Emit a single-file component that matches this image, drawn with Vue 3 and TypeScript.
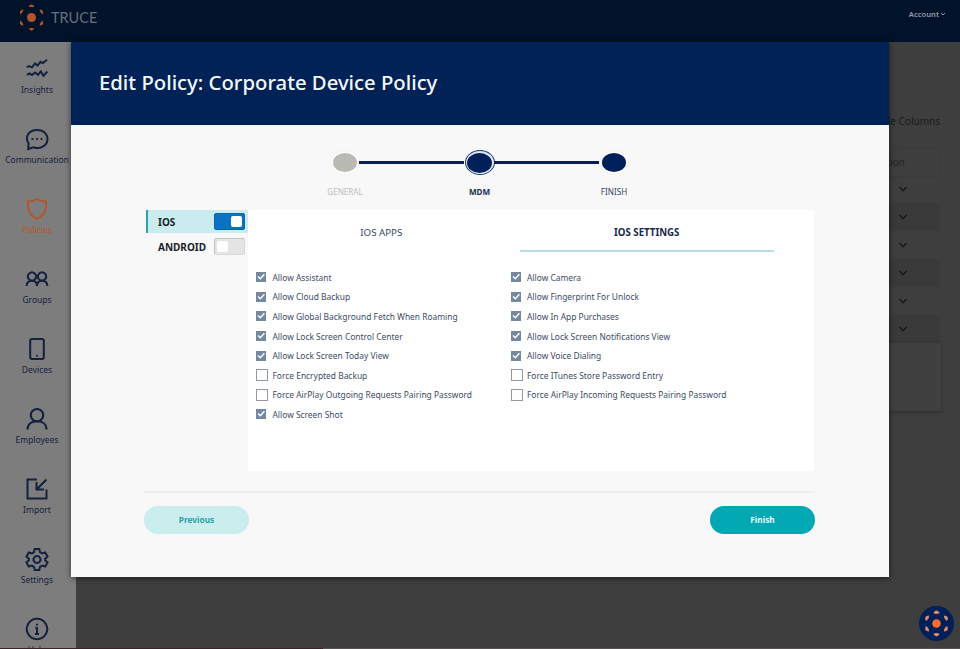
<template>
  <div class="app">
    <header class="topbar">
      <div class="brand">
        <svg class="logo" viewBox="0 0 26 26">
          <circle cx="13" cy="13" r="4.3" />
          <path v-for="a in angles" :key="a" d="M10.1 2.4Q13 -1.6 15.9 2.4Q13 3.6 10.1 2.4Z" :transform="`rotate(${a} 13 13)`" />
        </svg>
        <span class="brand-name">TRUCE</span>
      </div>
      <div class="account">
        Account
        <svg viewBox="0 0 6 4"><path d="M1 1L3 3L5 1" /></svg>
      </div>
    </header>

    <div class="body">
      <nav class="sidebar">
        <a v-for="item in menu" :key="item.label" :class="['nav-item', { active: item.label === 'Policies' }]">
          <svg viewBox="0 0 24 24"><path v-for="(d, i) in item.paths" :key="i" :d="d" /></svg>
          <span>{{ item.label }}</span>
        </a>
      </nav>

      <main class="page">
        <div class="columns-toggle">Hide Columns</div>
        <div class="table-head">Action</div>
        <div v-for="n in 6" :key="n" class="table-row">
          <svg viewBox="0 0 10 6"><path d="M1.2 1L5 4.6L8.8 1" /></svg>
        </div>
        <div class="table-foot"></div>
      </main>
    </div>

    <section class="modal">
      <div class="modal-header"><h1>Edit Policy: Corporate Device Policy</h1></div>
      <div class="modal-body">
        <div class="steps">
          <div v-for="step in steps" :key="step.label" :class="['step', step.state]">
            <div class="dot-ring"><div class="dot"></div></div>
            <span>{{ step.label }}</span>
          </div>
        </div>

        <div class="policy">
          <div class="platforms">
            <div v-for="p in platforms" :key="p.name" :class="['platform', { on: p.on }]" @click="p.on = !p.on">
              <span>{{ p.name }}</span>
              <div class="switch"><div class="knob"></div></div>
            </div>
          </div>
          <div class="panel">
            <div class="tabs">
              <div v-for="t in tabs" :key="t" :class="['tab', { selected: tab === t }]" @click="tab = t">
                <span>{{ t }}</span>
              </div>
            </div>
            <div class="settings">
              <div v-for="(column, c) in settings" :key="c" class="settings-col">
                <div v-for="s in column" :key="s.label" class="setting" @click="s.checked = !s.checked">
                  <div :class="['box', { checked: s.checked }]">
                    <svg v-if="s.checked" viewBox="0 0 10 10"><path d="M2 4.6L4.3 6.8L8.4 2.3" /></svg>
                  </div>
                  <span>{{ s.label }}</span>
                </div>
              </div>
            </div>
          </div>
        </div>

        <footer class="actions">
          <button class="btn previous">Previous</button>
          <button class="btn finish">Finish</button>
        </footer>
      </div>
    </section>

    <div class="help-bubble">
      <svg class="logo" viewBox="0 0 26 26">
        <circle cx="13" cy="13" r="4.1" />
        <path v-for="a in angles" :key="a" class="petal" d="M9.9 3Q13 -1.8 16.1 3Q13 4.8 9.9 3Z" :transform="`rotate(${a} 13 13)`" />
      </svg>
    </div>
    <div class="bottom-edge"></div>
  </div>
</template>

<script setup lang="ts">
import { ref } from 'vue';

interface Setting {
  label: string;
  checked: boolean;
}

const angles = [0, 60, 120, 180, 240, 300];

const menu = [
  { label: 'Insights', paths: ['M1.8 10.3L4 9L7 10.3L10 6.5L12.5 8.5L15.5 4.8L18 6L22 2.8', 'M1.8 17.8L4.5 16.5L7 18L10 15.5L13 17.8L15.8 14.5L18.5 18.8L22.2 14.5'] },
  { label: 'Communication', paths: ['M3.2 22L3.6 16.5C-.5 10 3.5 3 12 3C18.5 3 22.5 7 22.5 12C22.5 19 14.5 22.5 8.5 20.2Z', 'M6.6 12h1.8M11.1 12h1.8M15.6 12h1.8'] },
  { label: 'Policies', paths: ['M12 2Q16.5 4.8 21 4.6V10Q20.5 18 12 22Q3.5 18 3 10V4.6Q7.5 4.8 12 2Z'] },
  { label: 'Groups', paths: ['M7 5.3a4.2 4.2 0 1 0 .01 0zM17 5.3a4.2 4.2 0 1 0 .01 0z', 'M1.6 19C1.8 15.3 4 13.7 7 13.7S12 15.5 12 19C12 15.5 14 13.7 17 13.7S22.2 15.3 22.4 19'] },
  { label: 'Devices', paths: ['M7 2H17Q18.8 2 18.8 4V20Q18.8 22 17 22H7Q5.2 22 5.2 20V4Q5.2 2 7 2Z', 'M11.2 18.8h1.6'] },
  { label: 'Employees', paths: ['M12 2a6.2 6.2 0 1 0 .01 0z', 'M2.5 22.5C2.5 17 6.5 14.2 12 14.2S21.5 17 21.5 22.5'] },
  { label: 'Import', paths: ['M12 2.5H2.5V21.5H21.5V12.5', 'M21.5 2.5L12 12M11.5 5V12.5H19'] },
  { label: 'Settings', paths: ['M9.7 2H14.3L15 5.1L17.2 6.4L20.2 5.5L22.5 9.5L20.2 11.7V13.3L22.5 15.5L20.2 19.5L17.2 18.6L15 19.9L14.3 23H9.7L9 19.9L6.8 18.6L3.8 19.5L1.5 15.5L3.8 13.3V11.7L1.5 9.5L3.8 5.5L6.8 6.4L9 5.1Z', 'M12 9a3.5 3.5 0 1 0 .01 0z'] },
  { label: 'Help', paths: ['M12 1.8a10.2 10.2 0 1 0 .01 0z', 'M12 10.3V17.2M12 6.8v1.8M10.3 10.8H12M10 17H14'] },
];

const steps = [
  { label: 'GENERAL', state: 'done' },
  { label: 'MDM', state: 'current' },
  { label: 'FINISH', state: 'next' },
];

const platforms = ref([
  { name: 'IOS', on: true },
  { name: 'ANDROID', on: false },
]);

const tabs = ['IOS APPS', 'IOS SETTINGS'];
const tab = ref('IOS SETTINGS');

const settings = ref<Setting[][]>([
  [
    { label: 'Allow Assistant', checked: true },
    { label: 'Allow Cloud Backup', checked: true },
    { label: 'Allow Global Background Fetch When Roaming', checked: true },
    { label: 'Allow Lock Screen Control Center', checked: true },
    { label: 'Allow Lock Screen Today View', checked: true },
    { label: 'Force Encrypted Backup', checked: false },
    { label: 'Force AirPlay Outgoing Requests Pairing Password', checked: false },
    { label: 'Allow Screen Shot', checked: true },
  ],
  [
    { label: 'Allow Camera', checked: true },
    { label: 'Allow Fingerprint For Unlock', checked: true },
    { label: 'Allow In App Purchases', checked: true },
    { label: 'Allow Lock Screen Notifications View', checked: true },
    { label: 'Allow Voice Dialing', checked: true },
    { label: 'Force ITunes Store Password Entry', checked: false },
    { label: 'Force AirPlay Incoming Requests Pairing Password', checked: false },
  ],
]);
</script>

<style>
body {
  margin: 0;
  overflow: hidden;
}
</style>

<style scoped>
.app {
  position: relative;
  width: 960px;
  height: 649px;
  overflow: hidden;
  display: flex;
  flex-direction: column;
  background: #3e3e3e;
  font-family: "Noto Sans", "Open Sans", sans-serif;
  color: #1c2d50;
}
svg {
  fill: none;
  stroke: currentColor;
  display: block;
}
.topbar {
  flex: none;
  height: 42px;
  box-sizing: border-box;
  padding: 4px 14px 0 18px;
  display: flex;
  justify-content: space-between;
  align-items: flex-start;
  background: #00132a;
}
.brand {
  display: flex;
  align-items: center;
  gap: 6px;
}
.logo {
  width: 27px;
  height: 27px;
  fill: #b5562a;
  stroke: none;
}
.brand-name {
  font-family: Lato, sans-serif;
  font-size: 14.5px;
  color: #66707e;
}
.account {
  display: flex;
  align-items: center;
  gap: 1px;
  margin-top: 4px;
  font-size: 7.6px;
  line-height: 12px;
  font-weight: 600;
  color: #9299a3;
}
.account svg {
  width: 6px;
  height: 4px;
}
.body {
  flex: 1;
  min-height: 0;
  display: flex;
}
.sidebar {
  flex: none;
  width: 76px;
  background: #7d7d7d;
  overflow: hidden;
}
.nav-item {
  height: 70px;
  width: 74px;
  box-sizing: border-box;
  padding-top: 15px;
  display: flex;
  flex-direction: column;
  align-items: center;
  gap: 3px;
  font-size: 8.5px;
  line-height: 12px;
  color: #14203f;
}
.nav-item svg {
  width: 24px;
  height: 24px;
  stroke-width: 2;
}
.nav-item.active {
  color: #b3572a;
}
.page {
  flex: 1;
  padding: 70px 20px 0 0;
  display: flex;
  flex-direction: column;
  color: #171b1f;
}
.columns-toggle {
  height: 18px;
  line-height: 18px;
  font-size: 10px;
  text-align: right;
}
.table-head {
  height: 28px;
  margin-top: 17px;
  margin-bottom: -2px;
  padding-right: 34px;
  border: 1px solid #3a3a3a;
  font-size: 10px;
  line-height: 28px;
  text-align: right;
  color: #242424;
}
.table-row {
  height: 28px;
  padding-right: 32px;
  display: flex;
  align-items: center;
  justify-content: flex-end;
}
.table-row:nth-child(even) {
  background: #3a3a3a;
}
.table-row svg {
  width: 10px;
  height: 6px;
  stroke-width: 1.5;
}
.table-foot {
  height: 68px;
  margin-right: -1px;
  background: #404040;
  box-shadow: 0 1px 3px #2c2c2c;
}
.modal {
  position: absolute;
  left: 71px;
  top: 42px;
  width: 817.5px;
  height: 535px;
  background: #f8f8f8;
  box-shadow: 0 1px 6px rgba(0, 0, 0, 0.6);
}
.modal-header {
  height: 83px;
  box-sizing: border-box;
  padding: 0 0 3px 28px;
  display: flex;
  align-items: center;
  background: #002256;
}
.modal-header h1 {
  margin: 0;
  font-size: 20.3px;
  font-weight: 500;
  color: #f4f7fb;
}
.modal-body {
  padding: 25px 73.5px 0 73px;
}
.steps {
  display: flex;
  justify-content: center;
  margin-bottom: 12px;
}
.step {
  position: relative;
  width: 134.5px;
  display: flex;
  flex-direction: column;
  align-items: center;
  gap: 10px;
  font-size: 8.1px;
  line-height: 13px;
  color: #33435f;
}
/* connector to the previous step */
.step + .step::before {
  content: "";
  position: absolute;
  top: 11px;
  left: -53px;
  width: 105px;
  height: 3px;
  background: #0b1d57;
}
.dot-ring {
  position: relative;
  width: 30px;
  height: 25px;
  box-sizing: border-box;
  padding: 2px;
  border: 1px solid #f1f1f1;
  border-radius: 50%;
  background: #fcfcfc;
}
.dot {
  height: 100%;
  box-sizing: border-box;
  border-radius: 50%;
  background: #00205a;
}
.done .dot {
  background: #b9bab2;
}
.done {
  color: #bcbcbc;
}
.current .dot-ring {
  border: 1.5px solid #1b3566;
  padding: 1.5px;
  background: #dfe7f2;
}
.current {
  font-weight: 700;
  color: #1f3050;
}
.policy {
  display: flex;
  height: 260.5px;
  margin: 0 1.5px;
}
.platforms {
  width: 102.5px;
  flex: none;
}
.platform {
  height: 23px;
  margin-bottom: 2px;
  padding: 0 3.5px 0 10.5px;
  border-left: 2px solid transparent;
  display: flex;
  align-items: center;
  justify-content: space-between;
  font-size: 10px;
  font-weight: 700;
  color: #1b2228;
}
.platform.on {
  border-left-color: #27a3ad;
  background: #cbecef;
}
.switch {
  width: 31px;
  height: 17px;
  box-sizing: border-box;
  padding: 2px;
  border: 1px solid #c4c4c4;
  border-bottom-color: #dadada;
  border-right-color: #d8d8d8;
  border-radius: 2px;
  background: #e4e4e4;
  display: flex;
}
.knob {
  width: 11px;
  height: 11px;
  border-radius: 2px;
  background: #fff;
}
.on .switch {
  justify-content: flex-end;
  border-color: #0864ad;
  background: #0a72c4;
}
.panel {
  flex: 1;
  background: #fff;
}
.tabs {
  display: flex;
  gap: 11px;
  padding: 0 39.5px 0 6px;
}
.tab {
  flex: 1;
  height: 42px;
  box-sizing: border-box;
  padding-top: 16px;
  border-bottom: 2px solid transparent;
  font-size: 9.7px;
  line-height: 14px;
  text-align: center;
  color: #33455f;
}
.tab.selected {
  border-bottom-color: #b5e0e1;
  font-weight: 700;
  color: #16294b;
}
.settings {
  display: flex;
  padding: 15.5px 0 0 8px;
}
.settings-col {
  width: 254.5px;
}
.setting {
  height: 19.6px;
  display: flex;
  align-items: center;
  font-size: 8.42px;
  color: #3d4b66;
  white-space: nowrap;
}
.setting span {
  margin-left: 4.5px;
}
.box {
  width: 12px;
  height: 12px;
  box-sizing: border-box;
  border: 1px solid #9299a4;
  background: #fff;
}
.box.checked {
  width: 10px;
  height: 10px;
  margin-right: 2px;
  border: 0;
  background: #7488a0;
}
.box svg {
  width: 10px;
  height: 10px;
  stroke: #fff;
  stroke-width: 1.4;
}
.actions {
  margin-top: 20px;
  padding-top: 13.5px;
  border-top: 2px solid #eeeeee;
  display: flex;
  justify-content: space-between;
}
.btn {
  width: 105px;
  height: 28px;
  padding: 0 0 1px;
  border: 0;
  border-radius: 14px;
  font-family: inherit;
  font-size: 8.3px;
  font-weight: 700;
}
.previous {
  background: #caeeee;
  color: #2aa0a8;
}
.finish {
  background: #02a8b3;
  color: #e9fafa;
}
.help-bubble {
  position: absolute;
  right: 6px;
  bottom: 8px;
  width: 35px;
  height: 35px;
  border-radius: 50%;
  display: flex;
  align-items: center;
  justify-content: center;
  background: #00205a;
}
.help-bubble .logo {
  fill: #ff6d2e;
}
.help-bubble .petal {
  fill: #e08a6c;
}
.bottom-edge {
  position: absolute;
  left: 0;
  right: 0;
  bottom: 0;
  height: 1px;
  background: linear-gradient(90deg, #3c2229 323px, #565052 323px);
}
</style>
